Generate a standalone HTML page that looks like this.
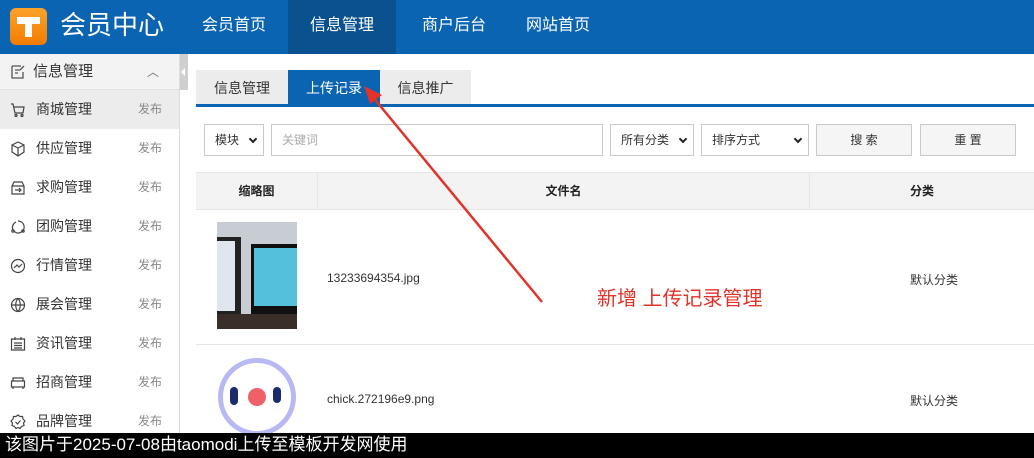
<!DOCTYPE html>
<html><head><meta charset="utf-8"><style>
*{margin:0;padding:0;box-sizing:border-box}
body{width:1034px;height:458px;overflow:hidden;position:relative;background:#fff;font-family:"Liberation Sans","Noto Sans CJK SC",sans-serif;font-size:13px;color:#333}
.hd{position:absolute;left:0;top:0;width:1034px;height:54px;background:#0b64b2}
.logo{position:absolute;left:10px;top:8px;width:37px;height:37px;border-radius:6px;background:linear-gradient(#fca32a,#f27c00)}
.logo:before{content:"";position:absolute;left:7px;top:9px;width:23px;height:7px;background:#fff}
.logo:after{content:"";position:absolute;left:15px;top:9px;width:7px;height:20px;background:#fff}
.title{position:absolute;left:60px;top:7px;color:#fff;font-size:26px;line-height:36px}
.nav{position:absolute;top:0;height:54px;line-height:52px;color:#fff;font-size:16px;text-align:center}
.side{position:absolute;left:0;top:54px;width:180px;height:380px;border-right:1px solid #ddd}
.sh{height:36px;background:#f3f3f3;border-bottom:1px solid #e2e2e2;line-height:36px;font-size:15px;padding-left:33px;position:relative;color:#333}
.it{height:39px;line-height:39px;font-size:14px;padding-left:36px;position:relative;color:#333}
.it span{position:absolute;right:17px;top:0;font-size:12px;color:#888}
.it svg{position:absolute;left:10px;top:12px}
.tog{position:absolute;left:180px;top:54px;width:8px;height:36px;background:#cfcfcf}
.tab{position:absolute;top:70px;height:36px;line-height:36px;font-size:14px;text-align:center;background:#ececec;color:#333}
.bar{position:absolute;left:196px;top:104px;width:838px;height:3px;background:#0b64b2}
.box{position:absolute;top:124px;height:32px;border:1px solid #c9c9c9;background:#fff;line-height:30px;font-size:12px;padding-left:10px;color:#333}
.chev{position:absolute;right:7px;top:11px;width:6px;height:6px;border-right:2px solid #222;border-bottom:2px solid #222;transform:rotate(45deg)}
.btn{background:#f5f5f5;text-align:center;padding:0}
.th{position:absolute;top:172px;height:38px;background:#f3f3f3;border-top:1px solid #e6e6e6;border-bottom:1px solid #e6e6e6;line-height:37px;text-align:center;font-weight:bold;font-size:12px;color:#222}
.td{position:absolute;font-size:12px;color:#333}
.foot{position:absolute;left:0;top:433px;width:1034px;height:25px;background:#000;color:#fff;font-size:17px;line-height:24px;padding-left:5px}
</style></head><body>
<div class="hd">
<div class="logo"></div>
<div class="title">会员中心</div>
<div class="nav" style="left:188px;width:92px">会员首页</div>
<div class="nav" style="left:288px;width:108px;background:#09528f">信息管理</div>
<div class="nav" style="left:404px;width:100px">商户后台</div>
<div class="nav" style="left:512px;width:92px">网站首页</div>
</div>
<div class="side">
<div class="sh"><svg style="position:absolute;left:10px;top:10px" width="16" height="16" viewBox="0 0 16 16" fill="none" stroke="#555" stroke-width="1.3"><path d="M2 2h9M2 2v12h11V8M5 6h5M5 9h3M10 6l4-4"/></svg>信息管理<span style="position:absolute;right:20px;top:0;color:#777;font-size:12px">︿</span></div>
<div class="it" style="background:#ececec"><svg width="16" height="16" viewBox="0 0 16 16" fill="none" stroke="#444" stroke-width="1.2"><path d="M1 2h2l2 9h8l1-6H4"/><circle cx="6" cy="13.5" r="1"/><circle cx="12" cy="13.5" r="1"/></svg>商城管理<span>发布</span></div>
<div class="it"><svg width="16" height="16" viewBox="0 0 16 16" fill="none" stroke="#444" stroke-width="1.2"><path d="M8 1l6 3v7l-6 4-6-4V4zM2 4l6 3 6-3M8 7v8"/></svg>供应管理<span>发布</span></div>
<div class="it"><svg width="16" height="16" viewBox="0 0 16 16" fill="none" stroke="#444" stroke-width="1.2"><path d="M2 6l2-4h8l2 4v8H2zM2 6h12M5 10h6M9 8l2 2-2 2"/></svg>求购管理<span>发布</span></div>
<div class="it"><svg width="16" height="16" viewBox="0 0 16 16" fill="none" stroke="#444" stroke-width="1.2"><path d="M8 2a6 6 0 1 1-5 9M3 11a6 6 0 0 1 3-8"/><circle cx="3" cy="12" r="1.2"/><circle cx="13" cy="12" r="1.2"/></svg>团购管理<span>发布</span></div>
<div class="it"><svg width="16" height="16" viewBox="0 0 16 16" fill="none" stroke="#444" stroke-width="1.2"><circle cx="8" cy="8" r="6.5"/><path d="M4 10l3-3 2 2 3-3"/></svg>行情管理<span>发布</span></div>
<div class="it"><svg width="16" height="16" viewBox="0 0 16 16" fill="none" stroke="#444" stroke-width="1.2"><circle cx="8" cy="8" r="6.5"/><path d="M1.5 8h13M8 1.5c-3 3-3 10 0 13M8 1.5c3 3 3 10 0 13"/></svg>展会管理<span>发布</span></div>
<div class="it"><svg width="16" height="16" viewBox="0 0 16 16" fill="none" stroke="#444" stroke-width="1.2"><path d="M1.5 3h13v11h-13zM5 1v3M11 1v3M4 7h8M4 9.5h8M4 12h8"/></svg>资讯管理<span>发布</span></div>
<div class="it"><svg width="16" height="16" viewBox="0 0 16 16" fill="none" stroke="#444" stroke-width="1.2"><path d="M3 6V3h10v3M1.5 6h13v6h-13zM3 12v2M13 12v2"/></svg>招商管理<span>发布</span></div>
<div class="it"><svg width="16" height="16" viewBox="0 0 16 16" fill="none" stroke="#444" stroke-width="1.2"><path d="M8 1l2 1.5h2.5l.5 2.5 2 2-1.5 2 .5 2.5-2.5 1-1.5 2-2-1-2 1-1.5-2-2.5-1 .5-2.5-1.5-2 2-2 .5-2.5H6z"/><path d="M5.5 8l2 2 3-3.5"/></svg>品牌管理<span>发布</span></div>
</div>
<div class="tog"><div style="position:absolute;left:1px;top:14px;border-right:4px solid #fff;border-top:4px solid transparent;border-bottom:4px solid transparent"></div></div>
<div class="tab" style="left:196px;width:92px">信息管理</div>
<div class="tab" style="left:288px;width:92px;background:#0b64b2;color:#fff">上传记录</div>
<div class="tab" style="left:380px;width:91px">信息推广</div>
<div class="bar"></div>
<div class="box" style="left:204px;width:60px">模块<i class="chev"></i></div>
<div class="box" style="left:271px;width:332px;color:#aaa">关键词</div>
<div class="box" style="left:610px;width:84px">所有分类<i class="chev"></i></div>
<div class="box" style="left:701px;width:108px">排序方式<i class="chev"></i></div>
<div class="box btn" style="left:816px;width:96px">搜 索</div>
<div class="box btn" style="left:920px;width:96px">重 置</div>
<div class="th" style="left:196px;width:122px;border-right:1px solid #e6e6e6">缩略图</div>
<div class="th" style="left:318px;width:492px;border-right:1px solid #e6e6e6">文件名</div>
<div class="th" style="left:810px;width:224px">分类</div>
<div style="position:absolute;left:217px;top:222px;width:80px;height:107px;background:#c7cdd3;overflow:hidden">
<div style="position:absolute;left:0;top:15px;width:24px;height:88px;background:#222"></div>
<div style="position:absolute;left:0;top:19px;width:18px;height:70px;background:#dfe6ee"></div>
<div style="position:absolute;left:34px;top:22px;width:46px;height:70px;background:#111"></div>
<div style="position:absolute;left:37px;top:26px;width:43px;height:58px;background:#55c0dc"></div>
<div style="position:absolute;left:0;top:92px;width:80px;height:15px;background:#3a2e2a"></div>
</div>
<div class="td" style="left:327px;top:271px">13233694354.jpg</div>
<div class="td" style="left:910px;top:271px">默认分类</div>
<div style="position:absolute;left:196px;top:344px;width:838px;height:1px;background:#e6e6e6"></div>
<div style="position:absolute;left:218px;top:358px;width:78px;height:78px;border-radius:50%;border:5px solid #b8b9f2"></div>
<div style="position:absolute;left:230px;top:387px;width:8px;height:18px;border-radius:4px;background:#1a2c6a"></div>
<div style="position:absolute;left:248px;top:388px;width:18px;height:18px;border-radius:50%;background:#f06068"></div>
<div style="position:absolute;left:273px;top:387px;width:8px;height:16px;border-radius:4px;background:#1a2c6a"></div>
<div class="td" style="left:327px;top:392px">chick.272196e9.png</div>
<div class="td" style="left:910px;top:392px">默认分类</div>
<svg style="position:absolute;left:0;top:0" width="1034" height="458"><line x1="542" y1="302" x2="372" y2="96" stroke="#e0332a" stroke-width="2.5"/><polygon points="364,86 382,95 370,104" fill="#e0332a"/></svg>
<div style="position:absolute;left:597px;top:282px;color:#e0332a;font-size:20px">新增 上传记录管理</div>
<div class="foot">该图片于2025-07-08由taomodi上传至模板开发网使用</div>
</body></html>
